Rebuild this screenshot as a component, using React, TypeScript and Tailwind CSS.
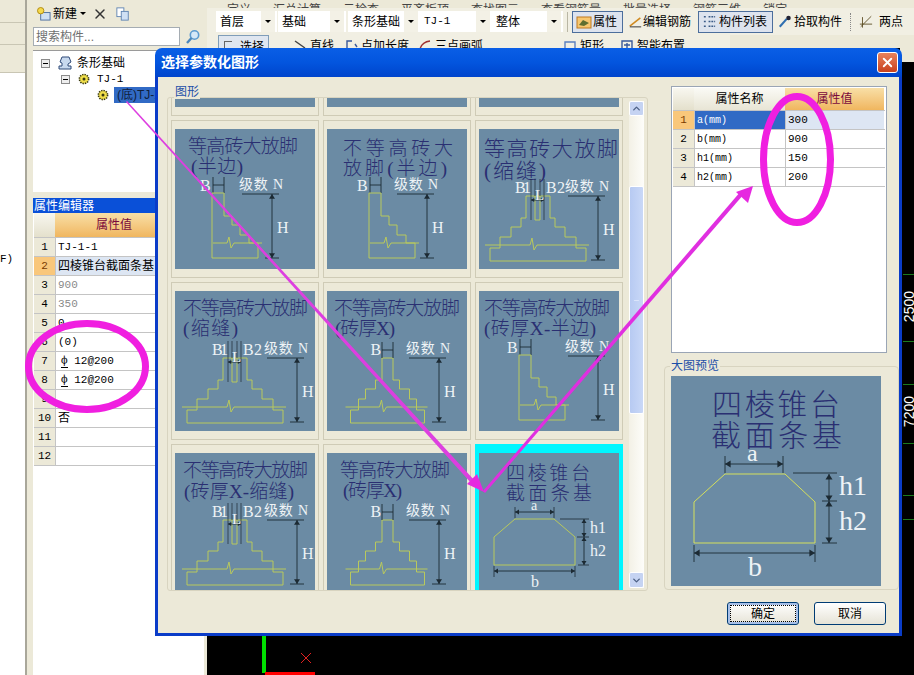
import { ChevronDown, ChevronUp, Minus, X } from 'lucide-react';

const INK = '#2a2f72';
const WHITE = '#eef3f6';
const LINE = '#1c2a33';
const FOOT = '#b9c95c';
const SERIF = '"Liberation Serif","Noto Sans CJK SC",serif';

// 题目文字,textLength 用来撑满原图的字距
function Title({ lines, size = 19 }: { lines: [string, number, number, number][]; size?: number }) {
  return (
    <>
      {lines.map(([t, x, y, w]) => (
        <text key={t} x={x} y={y} fontSize={size} fontWeight={300} fontFamily={SERIF} fill={INK} textLength={w} lengthAdjust="spacing">
          {t}
        </text>
      ))}
    </>
  );
}

function Label({ x, y, size = 16, children, w }: { x: number; y: number; size?: number; children: string; w?: number }) {
  return (
    <text x={x} y={y} fontSize={size} fontFamily={SERIF} fill={WHITE} textLength={w} lengthAdjust="spacing">
      {children}
    </text>
  );
}

function VDim({ x, y1, y2, s = 3 }: { x: number; y1: number; y2: number; s?: number }) {
  return (
    <g fill={LINE} stroke="none">
      <line x1={x} y1={y1} x2={x} y2={y2} stroke={LINE} strokeWidth={0.9} />
      <polygon points={`${x},${y1} ${x - s},${y1 + s * 1.6} ${x + s},${y1 + s * 1.6}`} />
      <polygon points={`${x},${y2} ${x - s},${y2 - s * 1.6} ${x + s},${y2 - s * 1.6}`} />
    </g>
  );
}

function HDim({ y, x1, x2, s = 3 }: { y: number; x1: number; x2: number; s?: number }) {
  return (
    <g fill={LINE} stroke="none">
      <line x1={x1} y1={y} x2={x2} y2={y} stroke={LINE} strokeWidth={0.9} />
      <polygon points={`${x1},${y} ${x1 + s * 1.6},${y - s} ${x1 + s * 1.6},${y + s}`} />
      <polygon points={`${x2},${y} ${x2 - s * 1.6},${y - s} ${x2 - s * 1.6},${y + s}`} />
    </g>
  );
}

function Level({ dx }: { dx: number }) {
  return (
    <>
      <Label x={dx + 64} y={60} size={14} w={44}>级数 N</Label>
      <line x1={dx + 67} y1={65} x2={dx + 104} y2={65} stroke={LINE} strokeWidth={0.9} />
      <VDim x={dx + 97} y1={65} y2={129} />
      <line x1={dx + 90} y1={129} x2={dx + 104} y2={129} stroke={LINE} strokeWidth={0.9} />
      <Label x={dx + 102} y={104}>H</Label>
    </>
  );
}

// 半边放脚
function HalfFoot({ fx = 0, dx = 0 }: { fx?: number; dx?: number }) {
  return (
    <>
      <g transform={`translate(${fx} 0)`}>
        <Label x={25} y={62}>B</Label>
        <path d="M38 48V64M49 48V64M38 56H49" stroke={LINE} strokeWidth={0.9} fill="none" />
        <path d="M37 64H49V87H57V96H65V106H74V114H83V129H37Z" stroke={FOOT} strokeWidth={1} fill="none" />
        <path d="M38 114H52L54 108L56 119L59 114H87" stroke={FOOT} strokeWidth={1} fill="none" />
      </g>
      <Level dx={dx} />
    </>
  );
}

const steps = (c: number, w: number[]) => {
  const ys = [67, 89, 98, 108, 119];
  const left = w.map((d, i) => `${c - d},${ys[i]} ${c - d},${ys[i + 1] ?? 132}`);
  const right = w.map((d, i) => `${c + d},${ys[i + 1] ?? 132} ${c + d},${ys[i]}`).reverse();
  return [...left, ...right].join(' ');
};

// 对称放脚,slot 为带缩缝的
function SymFoot({ c, w, slot, dx, gy = 116 }: { c: number; w: number[]; slot?: boolean; dx: number; gy?: number }) {
  return (
    <>
      <polygon points={steps(c, w)} stroke={FOOT} strokeWidth={1} fill="none" />
      <path
        d={`M${c - w[4] - 5} ${gy}H${c - 8}L${c - 6} ${gy - 7}L${c - 4} ${gy + 5}L${c - 1} ${gy}H${c + w[4] + 3}`}
        stroke={FOOT}
        strokeWidth={1}
        fill="none"
      />
      {slot ? (
        <>
          <path d={`M${c - 3} 67V91H${c + 2}V67`} stroke={FOOT} strokeWidth={1} fill="none" />
          <path d={`M${c - 7} 50V91M${c - 3} 50V67M${c + 2} 50V67M${c + 6} 50V91`} stroke={LINE} strokeWidth={0.7} />
          <Label x={c - 23} y={64} w={16}>B1</Label>
          <Label x={c + 8} y={64} w={19}>B2</Label>
          <HDim y={71} x1={c - 7} x2={c + 6} s={2} />
          <Label x={c - 3} y={71} size={15}>L</Label>
        </>
      ) : (
        <>
          <Label x={c - 17} y={64}>B</Label>
          <path d={`M${c - 5.5} 51V67M${c + 5.5} 51V67M${c - 5.5} 59H${c + 5.5}`} stroke={LINE} strokeWidth={0.9} fill="none" />
        </>
      )}
      <g transform="translate(0 2)">
        <Level dx={dx} />
      </g>
    </>
  );
}

const WIDE = [12, 17, 27, 38, 48];
const SLIM = [5.5, 12, 22, 29, 37];

function ThumbFrame({ children }: { children?: React.ReactNode }) {
  return (
    <svg viewBox="0 0 140 140" className="block h-[140px] w-[140px] bg-[#6b8ba4]">
      {children}
    </svg>
  );
}

const thumbs = [
  <ThumbFrame key="a">
    <Title lines={[['等高砖大放脚', 13, 24, 110], ['(半边)', 16, 44, 52]]} />
    <HalfFoot />
  </ThumbFrame>,
  <ThumbFrame key="b">
    <Title lines={[['不等高砖大', 16, 26, 110], ['放脚(半边)', 16, 46, 104]]} />
    <HalfFoot fx={5} dx={3} />
  </ThumbFrame>,
  <ThumbFrame key="c">
    <Title size={21} lines={[['等高砖大放脚', 5, 27, 134], ['(缩缝)', 5, 49, 62]]} />
    <SymFoot c={59} w={WIDE} slot dx={22} />
  </ThumbFrame>,
  <ThumbFrame key="d">
    <Title lines={[['不等高砖大放脚', 8, 24, 125], ['(缩缝)', 8, 44, 55]]} />
    <SymFoot c={60} w={WIDE} slot dx={25} />
  </ThumbFrame>,
  <ThumbFrame key="e">
    <Title lines={[['不等高砖大放脚', 7, 24, 126], ['(砖厚X)', 8, 44, 60]]} />
    <SymFoot c={60.5} w={SLIM} dx={15} />
  </ThumbFrame>,
  <ThumbFrame key="f">
    <Title lines={[['不等高砖大放脚', 5, 24, 126], ['(砖厚X-半边)', 5, 44, 112]]} />
    <HalfFoot fx={3} dx={22} />
  </ThumbFrame>,
  <ThumbFrame key="g">
    <Title lines={[['不等高砖大放脚', 8, 24, 125], ['(砖厚X-缩缝)', 9, 45, 110]]} />
    <SymFoot c={60} w={WIDE} slot dx={25} />
  </ThumbFrame>,
  <ThumbFrame key="h">
    <Title lines={[['等高砖大放脚', 13, 24, 110], ['(砖厚X)', 16, 44, 59]]} />
    <SymFoot c={60.5} w={SLIM} dx={15} />
  </ThumbFrame>,
  <ThumbFrame key="i">
    <Title lines={[['四棱锥台', 27, 27, 84], ['截面条基', 27, 47, 86]]} />
    <Label x={52} y={57} size={14}>a</Label>
    <path d="M36 54V65M75 54V65M81 66H110M98 84H110M99 112H110M15 113V124M96 113V124" stroke={LINE} strokeWidth={0.8} fill="none" />
    <HDim y={59} x1={36} x2={75} s={2.5} />
    <polygon points="36,66 75,66 96,84 96,112 15,112 15,84" stroke={FOOT} strokeWidth={1} fill="none" />
    <VDim x={105} y1={66} y2={84} s={2.5} />
    <VDim x={105} y1={84} y2={112} s={2.5} />
    <Label x={111} y={80} size={16}>h1</Label>
    <Label x={111} y={103} size={16}>h2</Label>
    <HDim y={118} x1={15} x2={96} s={2.5} />
    <Label x={52} y={134} size={16}>b</Label>
  </ThumbFrame>,
];

function Preview() {
  return (
    <svg viewBox="0 0 210 210" className="block h-[210px] w-[210px] bg-[#6b8ba4]">
      <Title size={30} lines={[['四棱锥台', 41, 39, 128], ['截面条基', 40, 70, 131]]} />
      <Label x={76} y={85} size={24}>a</Label>
      <path d="M54 80V97M112 80V97M122 97H166M151 125H166M151 167H166M23 169V186M144 169V186" stroke={LINE} strokeWidth={0.9} fill="none" />
      <HDim y={88} x1={54} x2={112} s={3.5} />
      <polygon points="54,98 114,98 144,126 144,167 23,167 23,126" stroke="#d6e05c" strokeWidth={1} fill="none" />
      <VDim x={158} y1={98} y2={125} s={3.5} />
      <VDim x={158} y1={125} y2={167} s={3.5} />
      <Label x={168} y={119} size={28}>h1</Label>
      <Label x={168} y={154} size={28}>h2</Label>
      <HDim y={177} x1={23} x2={144} s={3.5} />
      <Label x={77} y={200} size={28}>b</Label>
    </svg>
  );
}

function Gear({ className = '' }: { className?: string }) {
  return (
    <svg viewBox="0 0 12 12" className={`h-[12px] w-[12px] shrink-0 ${className}`}>
      <circle cx="6" cy="6" r="4.6" fill="#f2e04a" stroke="#3a3a10" strokeWidth="1.6" strokeDasharray="1.4 1" />
      <circle cx="6" cy="6" r="1.5" fill="#3a3a10" />
    </svg>
  );
}

function Expander() {
  return (
    <span className="flex h-[9px] w-[9px] shrink-0 items-center justify-center border border-[#8a8a8a] bg-[#eeeeee]">
      <span className="h-px w-[5px] bg-black" />
    </span>
  );
}

function ToolSelect({ label, className, mono }: { label: string; className: string; mono?: boolean }) {
  return (
    <div className={`flex h-[21px] shrink-0 items-center justify-between bg-white pl-[4px] pr-[2px] ${className}`}>
      <span className={mono ? "font-['Liberation_Mono','Noto_Sans_CJK_SC',monospace] text-[11px]" : 'text-[12px]'}>{label}</span>
      <span className="flex h-full w-[14px] items-center justify-center bg-[#f3f1e6]">
        <span className="h-0 w-0 border-x-[3px] border-t-[3px] border-x-transparent border-t-black" />
      </span>
    </div>
  );
}

function ToolButton({ icon, label, active, className }: { icon: React.ReactNode; label: string; active?: boolean; className: string }) {
  return (
    <div
      className={`flex h-[22px] shrink-0 items-center whitespace-nowrap px-[3px] text-[12px] ${className} ${
        active ? 'border border-[#4c6e9c] bg-[#dde3ee]' : ''
      }`}
    >
      {icon}
      <span>{label}</span>
    </div>
  );
}

function Toolbar() {
  return (
    <div className="flex h-[48px] shrink-0 flex-col overflow-hidden bg-[#ece9d8] text-black">
      <div className="flex h-[8px] items-end gap-[22px] overflow-hidden pl-[20px] text-[12px] leading-[14px] text-[#444]">
        {['定义', '汇总计算', '云检查', '平齐板顶', '查找图元', '查看钢筋量', '批量选择', '钢筋三维', '锁定'].map(t => (
          <span key={t} className="-mb-[9px] shrink-0">{t}</span>
        ))}
      </div>
      <div className="flex h-[27px] items-center bg-[#f1efe3] pl-[9px]">
        <ToolSelect label="首层" className="w-[61px]" />
        <ToolSelect label="基础" className="ml-[1px] w-[68px]" />
        <ToolSelect label="条形基础" className="ml-[2px] w-[72px]" />
        <ToolSelect label="TJ-1" mono className="w-[72px]" />
        <ToolSelect label="整体" className="w-[71px]" />
        <div className="ml-[4px] mr-[4px] h-[20px] w-px bg-[#b9b6a4]" />
        <ToolButton
          active
          className="w-[51px] gap-[1px]"
          label="属性"
          icon={
            <svg viewBox="0 0 16 16" className="h-[16px] w-[16px]">
              <rect x="1" y="3" width="14" height="11" fill="#f7c770" stroke="#c07a20" />
              <path d="M3 11l4-5 6 3-5 3z" fill="#5f6f30" />
            </svg>
          }
        />
        <ToolButton
          className="ml-[3px] w-[68px] gap-[1px]"
          label="编辑钢筋"
          icon={
            <svg viewBox="0 0 16 16" className="h-[14px] w-[14px]">
              <path d="M1 13L14 3" stroke="#d08a20" strokeWidth="2" />
              <path d="M1 14H15" stroke="#333" strokeWidth="1.2" />
            </svg>
          }
        />
        <ToolButton
          active
          className="ml-[4px] w-[75px] gap-[2px]"
          label="构件列表"
          icon={
            <svg viewBox="0 0 16 16" className="h-[15px] w-[15px]">
              <path d="M2 3h3M2 8h3M2 13h3M7 3h7M7 8h7M7 13h7" stroke="#3a5a86" strokeWidth="1.6" strokeDasharray="2 1" />
            </svg>
          }
        />
        <ToolButton
          className="ml-[2px] w-[70px] gap-[2px]"
          label="拾取构件"
          icon={
            <svg viewBox="0 0 16 16" className="h-[15px] w-[15px]">
              <path d="M2 14L10 5" stroke="#2f6fb0" strokeWidth="2.4" />
              <circle cx="12" cy="4" r="2.6" fill="#223" />
            </svg>
          }
        />
        <div className="ml-[5px] mr-[5px] h-[18px] w-px border-l border-dotted border-[#888]" />
        <ToolButton
          className="w-[50px] gap-[6px]"
          label="两点"
          icon={
            <svg viewBox="0 0 16 16" className="h-[15px] w-[15px]">
              <path d="M2 14L14 2M4 3V15M1 11H15" stroke="#5a4a20" strokeWidth="1" />
            </svg>
          }
        />
      </div>
      <div className="flex h-[13px] w-[523px] items-start gap-[5px] bg-[#f1efe3] pl-[11px] text-[12px] leading-[16px]">
        <div className="flex h-[16px] w-[51px] shrink-0 items-start gap-[8px] border border-[#7f9db9] bg-[#dfe6f0] pl-[5px] pt-[3px]">
          <span className="mt-[2px] h-[8px] w-[8px] border-l border-t border-[#666]" />
          <span>选择</span>
        </div>
        <RowItem className="ml-[19px]" color="#444" label="直线" path="M2 2L12 9" />
        <RowItem className="ml-[5px]" color="#3a5a9a" label="点加长度" path="M3 10V2H8M11 5L13 8" />
        <RowItem className="ml-[4px]" color="#a03030" label="三点画弧" path="M2 10Q4 3 12 2" />
        <RowItem className="ml-[75px]" color="#5a80c0" label="矩形" path="M2 3H12V11H2Z" />
        <RowItem className="ml-[11px]" color="#3a5a9a" label="智能布置" path="M2 2H12V11H2ZM7 4V9M4 6H10" />
      </div>
    </div>
  );
}

function RowItem({ className, color, label, path }: { className: string; color: string; label: string; path: string }) {
  return (
    <span className={`mt-[3px] flex shrink-0 items-start gap-[3px] ${className}`}>
      <svg viewBox="0 0 14 12" className="mt-[1px] h-[12px] w-[14px]">
        <path d={path} stroke={color} strokeWidth="1.4" fill="none" />
      </svg>
      <span>{label}</span>
    </span>
  );
}

function Canvas() {
  return (
    <div className="relative flex-1 bg-black">
      {/* 轴网标注和原点,画布上的东西才用绝对定位 */}
      <div className="absolute left-[55px] top-[588px] h-[37px] w-[4px] bg-[#00e000]" />
      <div className="absolute left-[58px] top-[624px] h-[3px] w-[50px] bg-[#ff0000]" />
      <svg viewBox="0 0 12 12" className="absolute left-[93px] top-[604px] h-[12px] w-[12px]">
        <path d="M1 1L11 11M11 1L1 11" stroke="#e02020" />
      </svg>
      {[274, 341, 384, 443, 495, 519].map(y => (
        <div key={y} style={{ top: y - 48 }} className="absolute left-[696px] h-px w-[11px] bg-[#1c7a1c]" />
      ))}
      <span className="absolute left-[695px] top-[243px] rotate-180 font-['Liberation_Sans',sans-serif] text-[14px] leading-[14px] text-white [writing-mode:vertical-rl]">2500</span>
      <span className="absolute left-[695px] top-[348px] rotate-180 font-['Liberation_Sans',sans-serif] text-[14px] leading-[14px] text-white [writing-mode:vertical-rl]">7200</span>
      <div className="absolute left-[693px] top-0 h-[14px] w-[14px] bg-[#ece9d8]" />
    </div>
  );
}

const leftRows: [string, string, string][] = [
  ['1', 'TJ-1-1', 'mono'],
  ['2', '四棱锥台截面条基', 'sel'],
  ['3', '900', 'gray'],
  ['4', '350', 'gray'],
  ['5', '0', 'mono'],
  ['6', '(0)', 'mono'],
  ['7', '12@200', 'bar'],
  ['8', '12@200', 'bar'],
  ['9', '', ''],
  ['10', '否', ''],
  ['11', '', ''],
  ['12', '', ''],
];

function LeftPanel() {
  return (
    <div className="flex w-[180px] shrink-0 flex-col bg-[#ece9d8] pl-[6px] pr-[3px] text-black">
      <div className="h-[50px] shrink-0">
        <div className="flex h-[27px] items-center gap-[2px] pl-[3px] text-[12px]">
          <svg viewBox="0 0 16 16" className="h-[15px] w-[15px]">
            <rect x="5" y="7" width="10" height="8" fill="#cfe0f4" stroke="#4d6fa0" />
            <circle cx="5" cy="5" r="3.4" fill="#f5d94c" stroke="#b08a10" />
          </svg>
          <span>新建</span>
          <span className="ml-[1px] h-0 w-0 border-x-[3px] border-t-[3px] border-x-transparent border-t-black" />
          <X size={16} strokeWidth={2.2} className="ml-[4px] text-[#333]" />
          <svg viewBox="0 0 16 16" className="ml-[6px] h-[14px] w-[14px]">
            <rect x="1" y="1" width="8" height="10" fill="#fff" stroke="#5a80b0" />
            <rect x="6" y="5" width="8" height="10" fill="#cfe0f4" stroke="#5a80b0" />
          </svg>
        </div>
        <div className="flex items-center">
          <div className="flex h-[19px] w-[147px] items-center border border-[#a5acb2] bg-white pl-[2px] text-[12px] text-[#6f6f6f]">搜索构件...</div>
          <svg viewBox="0 0 16 16" className="ml-[5px] h-[16px] w-[16px]">
            <circle cx="9.5" cy="6" r="4.2" fill="#d5e8f7" stroke="#5c9bd0" strokeWidth="1.6" />
            <path d="M6.5 9L2 14" stroke="#4a86bd" strokeWidth="2.4" />
          </svg>
        </div>
      </div>
      <div className="h-[142px] shrink-0 border-t border-[#9a9a9a] bg-white pt-[4px] text-[12px]">
        <div className="flex h-[16px] items-center pl-[8px]">
          <Expander />
          <svg viewBox="0 0 16 16" className="ml-[7px] h-[16px] w-[16px]">
            <path d="M5 2h7l2 5-3 2v2h3v3H2v-3h3V8L3 7z" fill="#c8d9ee" stroke="#2f4a78" />
          </svg>
          <span className="ml-[4px]">条形基础</span>
        </div>
        <div className="flex h-[16px] items-center pl-[28px]">
          <Expander />
          <Gear className="ml-[8px]" />
          <span className="ml-[7px] font-['Liberation_Mono',monospace] text-[11px]">TJ-1</span>
        </div>
        <div className="flex h-[16px] items-center pl-[64px]">
          <Gear />
          <span className="ml-[5px] flex h-[16px] w-[60px] items-center bg-[#316ac5] pl-[3px] text-[#10203c]">(底)TJ-1</span>
        </div>
      </div>
      <div className="h-[6px] shrink-0" />
      <div className="flex h-[15px] shrink-0 items-center bg-[#0a50d8] pl-[1px] text-[12px] text-white">属性编辑器</div>
      <div className="flex-1 bg-white pl-px text-[12px]">
        <div className="flex h-[25px] border-b border-[#c4c4c4]">
          <div className="w-[21px] bg-gradient-to-b from-[#f8f7f0] to-[#e4e0cc]" />
          <div className="flex flex-1 items-center bg-gradient-to-b from-[#f8dfa6] to-[#f0b65e] pl-[41px] text-[#7a0a3c]">属性值</div>
        </div>
        {leftRows.map(([n, v, kind]) => (
          <div key={n} className="flex h-[19px] border-b border-[#c4c4c4]">
            <div
              className={`flex w-[21px] items-center justify-center font-['Liberation_Mono',monospace] text-[11px] ${
                kind === 'sel' ? 'bg-[#f9c77b] text-[#7a3a00]' : 'bg-[#ece9d8]'
              }`}
            >
              {n}
            </div>
            <div className={`flex flex-1 items-center whitespace-nowrap border-l border-[#c4c4c4] pl-[2px] ${kind === 'sel' ? 'bg-[#dde6f3]' : ''}`}>
              {kind === 'gray' && <span className="font-['Liberation_Mono',monospace] text-[11px] text-[#8a8a8a]">{v}</span>}
              {kind === 'mono' && <span className="font-['Liberation_Mono',monospace] text-[11px]">{v}</span>}
              {kind === 'bar' && (
                <span className="pl-[3px] font-['Liberation_Mono',monospace] text-[11px]">
                  <span className="border-b border-black">ф</span> {v}
                </span>
              )}
              {(kind === 'sel' || kind === '') && <span>{v}</span>}
            </div>
          </div>
        ))}
      </div>
    </div>
  );
}

const propRows = [
  ['1', 'a(mm)', '300'],
  ['2', 'b(mm)', '900'],
  ['3', 'h1(mm)', '150'],
  ['4', 'h2(mm)', '200'],
];

function PropTable() {
  return (
    <div className="ml-[7px] h-[267px] w-[216px] border border-[#9aa5b5] bg-white p-px text-[12px]">
      <div className="flex h-[23px] border-b border-[#c4c4c4]">
        <div className="w-[21px] bg-gradient-to-b from-[#f8f7f0] to-[#e4e0cc]" />
        <div className="flex w-[91px] items-center justify-center bg-gradient-to-b from-[#fafaf5] to-[#e8e5d5]">属性名称</div>
        <div className="flex w-[99px] items-center justify-center bg-gradient-to-b from-[#f8dfa6] to-[#f0b65e] text-[#7a0a3c]">属性值</div>
      </div>
      {propRows.map(([n, k, v], i) => (
        <div key={n} className="flex h-[19px] border-b border-[#c4c4c4] font-['Liberation_Mono','Noto_Sans_CJK_SC',monospace] text-[10px]">
          <div className={`flex w-[21px] items-center justify-center text-[11px] ${i === 0 ? 'bg-[#f9c77b] text-[#7a3a00]' : 'bg-[#ece9d8]'}`}>{n}</div>
          <div className={`flex w-[91px] items-center border-l border-[#c4c4c4] pl-[2px] ${i === 0 ? 'bg-[#316ac5] text-white' : ''}`}>{k}</div>
          <div className={`flex w-[99px] items-center border-l border-[#c4c4c4] pl-[2px] text-[11px] ${i === 0 ? 'bg-[#dde6f3]' : ''}`}>{v}</div>
        </div>
      ))}
    </div>
  );
}

function DialogButton({ label, focused }: { label: string; focused?: boolean }) {
  return (
    <div
      className={`flex h-[23px] w-[72px] items-center justify-center rounded-[3px] border border-[#003c74] bg-gradient-to-b from-white to-[#e6e3d6] text-[12px] text-black ${
        focused ? 'shadow-[inset_0_0_0_2px_#a8c0e8]' : ''
      }`}
    >
      <span className={focused ? 'flex h-[17px] w-[66px] items-center justify-center border border-dotted border-black' : ''}>{label}</span>
    </div>
  );
}

function Scrollbar() {
  return (
    <div className="ml-[2px] mt-[3px] flex h-[487px] w-[15px] flex-col bg-gradient-to-r from-[#f3f1e6] to-[#fdfdfa]">
      <div className="flex h-[15px] items-center justify-center rounded-[2px] border border-white bg-[#c5d3f2] text-[#4d6185]">
        <ChevronUp size={11} strokeWidth={3} />
      </div>
      <div className="mt-[70px] flex h-[228px] items-center justify-center rounded-[2px] border border-white bg-gradient-to-r from-[#b7caf2] to-[#c9d8f7]">
        <Minus size={7} className="text-[#eef3ff]" />
      </div>
      <div className="flex-1" />
      <div className="flex h-[16px] items-center justify-center rounded-[2px] border border-white bg-[#c5d3f2] text-[#4d6185]">
        <ChevronDown size={11} strokeWidth={3} />
      </div>
    </div>
  );
}

function Dialog() {
  return (
    <div className="absolute left-[155px] top-[48px] flex h-[588px] w-[747px] flex-col font-['Liberation_Sans','Noto_Sans_CJK_SC',sans-serif]">
      <div className="flex h-[29px] shrink-0 items-center justify-between rounded-t-[7px] bg-gradient-to-b from-[#0a5ee6] via-[#0355de] to-[#0044cc] pl-[6px] pr-[4px]">
        <span className="text-[14px] font-bold text-white">选择参数化图形</span>
        <div className="flex h-[21px] w-[21px] items-center justify-center rounded-[3px] border border-white bg-gradient-to-b from-[#e8825c] to-[#c8401c] text-white">
          <X size={15} strokeWidth={3} />
        </div>
      </div>
      <div className="flex flex-1 flex-col border-x-[3px] border-b-[3px] border-[#0a3cc8] bg-[#ece9d8]">
        <div className="flex pl-[9px] pt-[20px]">
          <div className="relative flex h-[494px] w-[481px] rounded-[3px] border border-[#d8d4c0]">
            <span className="absolute -top-[13px] left-[6px] bg-[#ece9d8] px-px text-[12px] leading-[14px] text-[#1c4fa8]">图形</span>
            <div className="h-[492px] w-[459px] overflow-hidden pl-[3px]">
              <div className="-mt-[140px] grid grid-cols-[148px_148px_148px] gap-[4px]">
                {[0, 1, 2].map(i => (
                  <div key={i} className="h-[158px] border border-[#cfcbb6] px-[3px] pt-[8px]">
                    <ThumbFrame />
                  </div>
                ))}
                {thumbs.map((t, i) =>
                  i === 8 ? (
                    <div key={i} className="h-[158px] bg-[#00f6ff] pl-[4px] pt-[9px]">
                      {t}
                    </div>
                  ) : (
                    <div key={i} className="h-[158px] border border-[#cfcbb6] px-[3px] pt-[8px]">
                      {t}
                    </div>
                  )
                )}
              </div>
            </div>
            <Scrollbar />
          </div>
          <div className="-mt-[11px] ml-[16px] w-[235px]">
            <PropTable />
            <div className="relative mt-[13px] h-[224px] rounded-[4px] border border-[#d8d4c0] pl-[6px] pt-[9px]">
              <span className="absolute -top-[8px] left-[5px] bg-[#ece9d8] px-px text-[12px] leading-[14px] text-[#1c4fa8]">大图预览</span>
              <Preview />
            </div>
          </div>
        </div>
        <div className="mt-[11px] flex gap-[15px] pl-[569px]">
          <DialogButton label="确定" focused />
          <DialogButton label="取消" />
        </div>
      </div>
    </div>
  );
}

// 截图上手工加的粉色批注
function Annotations() {
  return (
    <svg viewBox="0 0 914 675" className="pointer-events-none absolute inset-0 h-[675px] w-[914px]">
      <ellipse cx="87" cy="366.5" rx="58.5" ry="43" fill="none" stroke="#f01fe0" strokeWidth="7" />
      <ellipse cx="797" cy="159.5" rx="33.5" ry="63" fill="none" stroke="#f01fe0" strokeWidth="7" />
      <polygon points="126,102 127,101 475,481 472,484" fill="#dd3fe0" />
      <polygon points="484,492 467,484 477,474" fill="#e628e0" />
      <polygon points="483,491 485,493 744,194 741,191" fill="#e02fe0" />
      <polygon points="753,186 748,203 736,192" fill="#e628e0" />
    </svg>
  );
}

export default function App() {
  return (
    <div className="relative flex h-[675px] w-[914px] overflow-hidden bg-[#ece9d8] font-['Liberation_Sans','Noto_Sans_CJK_SC',sans-serif]">
      <div className="flex w-[27px] shrink-0 flex-col border-r-2 border-[#a9a79a]">
        <div className="h-[23px] border-b border-[#c9c6b4]" />
        <div className="h-[22px] border-b border-[#c9c6b4]" />
        <div className="h-[28px] border-b border-[#c9c6b4]" />
        <div className="flex-1 bg-white pt-[178px] font-['Liberation_Mono',monospace] text-[11px]">F)</div>
      </div>
      <LeftPanel />
      <div className="flex flex-1 flex-col">
        <Toolbar />
        <Canvas />
      </div>
      <Dialog />
      <Annotations />
    </div>
  );
}
